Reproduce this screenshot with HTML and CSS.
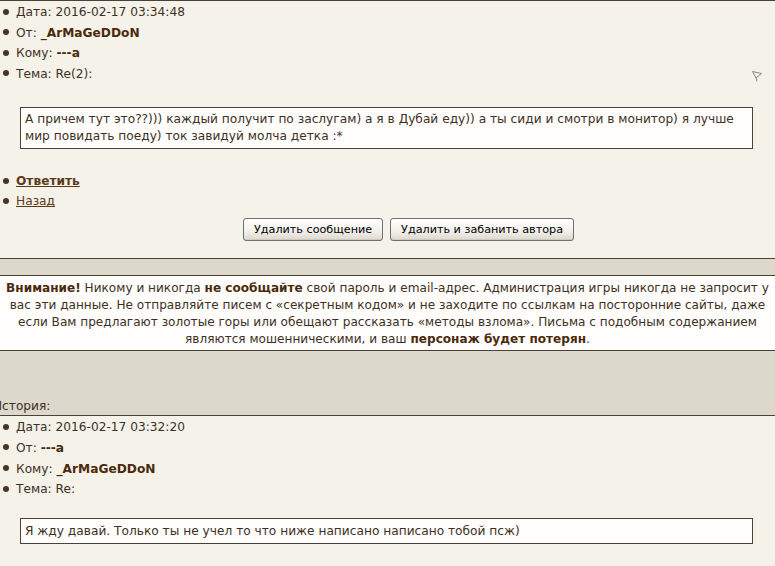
FILE: index.html
```html
<!DOCTYPE html>
<html lang="ru">
<head>
<meta charset="utf-8">
<title>Сообщение</title>
<link rel="stylesheet" href="styles.css">
</head>
<body>
<div class="msg">
  <ul class="meta">
    <li>Дата: 2016-02-17 03:34:48</li>
    <li>От: <b class="nick">_ArMaGeDDoN</b></li>
    <li>Кому: <b class="nick">---a</b></li>
    <li>Тема: Re(2):<svg class="flag" width="12" height="13" viewBox="0 0 12 13"><path d="M1.5 1.5 L10.5 3.5 L5 8 Z M5 8 L6 11.5" fill="none" stroke="#8a8680" stroke-width="1"/></svg></li>
  </ul>
  <div class="body">А причем тут это??))) каждый получит по заслугам) а я в Дубай еду)) а ты сиди и смотри в монитор) я лучше мир повидать поеду) ток завидуй молча детка :*</div>
  <ul class="meta links">
    <li><a href="#" class="reply">Ответить</a></li>
    <li><a href="#">Назад</a></li>
  </ul>
  <div class="actions">
    <button class="btn">Удалить сообщение</button>
    <button class="btn">Удалить и забанить автора</button>
  </div>
</div>
<div class="band"></div>
<div class="warn">
  <b>Внимание!</b> Никому и никогда <b>не сообщайте</b> свой пароль и email-адрес. Администрация игры никогда не запросит у<br>вас эти данные. Не отправляйте писем с «секретным кодом» и не заходите по ссылкам на посторонние сайты, даже<br>если Вам предлагают золотые горы или обещают рассказать «методы взлома». Письма с подобным содержанием<br>являются мошенническими, и ваш <b>персонаж будет потерян</b>.
</div>
<div class="history-band">
  <div class="history-label">История:</div>
</div>
<div class="msg old">
  <ul class="meta">
    <li>Дата: 2016-02-17 03:32:20</li>
    <li>От: <b class="nick">---a</b></li>
    <li>Кому: <b class="nick">_ArMaGeDDoN</b></li>
    <li>Тема: Re:</li>
  </ul>
  <div class="body">Я жду давай. Только ты не учел то что ниже написано написано тобой псж)</div>
</div>
</body>
</html>
```
FILE: styles.css
```css
html, body {
  margin: 0;
  padding: 0;
  background: #f5f2ea;
}
body {
  font-family: "DejaVu Sans", Verdana, sans-serif;
  font-size: 12.2px;
  color: #3d3024;
  width: 775px;
  overflow: hidden;
}
.msg {
  border-top: 1px solid #4d4034;
  border-bottom: 1px solid #4d4034;
  padding-top: 1px;
}
.msg.old {
  border-bottom: none;
  padding-bottom: 30px;
}
.meta {
  list-style: none;
  margin: 0;
  padding: 0 0 0 3px;
}
.meta li {
  display: block;
  height: 20.6px;
  line-height: 20.6px;
  white-space: nowrap;
}
.meta li::before {
  content: "";
  display: inline-block;
  vertical-align: middle;
  position: relative;
  top: -1px;
  width: 6px;
  height: 6px;
  border-radius: 50%;
  background: #4a3420;
  margin-right: 7px;
}
.flag {
  float: right;
  margin: 6px 12px 0 0;
}
.nick {
  color: #4b2a0c;
}
.body {
  margin: 23px 22px 0 20px;
  background: #fffefc;
  border: 1px solid #4d4034;
  padding: 3px 4px;
  line-height: 17px;
}
.old .body {
  margin-top: 18px;
  padding: 4px 4px 3px;
}
.links {
  margin-top: 22px;
  height: 40px;
}
.links li {
  height: 20px;
  line-height: 20px;
}
.links a {
  color: #5b3a17;
  text-decoration: underline;
}
.links a.reply {
  font-weight: bold;
}
.actions {
  display: flex;
  justify-content: center;
  gap: 7px;
  padding: 7px 0 17px 42px;
}
.btn {
  font-family: "DejaVu Sans", Verdana, sans-serif;
  font-size: 11.2px;
  color: #000;
  height: 23px;
  padding: 0 10px;
  border: 1px solid #707070;
  border-radius: 3px;
  background: linear-gradient(#ffffff, #f1efea 60%, #dcd8d0);
  box-shadow: inset 0 -1px 0 #cfcac0;
}
.band {
  height: 16px;
  background: #ddd8cc;
}
.warn {
  background: #fffefc;
  border-top: 1px solid #4d4034;
  border-bottom: 1px solid #4d4034;
  text-align: center;
  font-size: 12.1px;
  line-height: 17px;
  padding: 4px 0 2px;
  white-space: nowrap;
}
.warn b {
  color: #4b2a0c;
}
.history-band {
  background: #ddd8cc;
  height: 64px;
  display: flex;
  align-items: flex-end;
}
.history-label {
  margin-left: -7px;
  line-height: 17px;
}
```
